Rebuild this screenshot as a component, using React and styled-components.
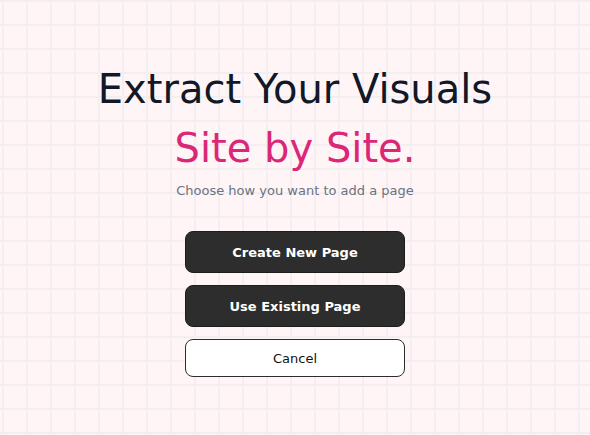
import React from 'react'
import styled, { createGlobalStyle } from 'styled-components'

const GlobalStyle = createGlobalStyle`
  html, body {
    margin: 0;
    padding: 0;
  }
  body {
    font-family: "DejaVu Sans", "Noto Sans", sans-serif;
  }
`

const Page = styled.div`
  min-height: 100vh;
  box-sizing: border-box;
  padding-top: 65px;
  display: flex;
  flex-direction: column;
  align-items: center;
  background-color: #fff5f7;
  background-image:
    linear-gradient(to right, #f3eff0 2px, transparent 2px),
    linear-gradient(to bottom, #f3eff0 2px, transparent 2px);
  background-size: 24px 24px;
  background-position: 2px 0;
`

const Title = styled.h1`
  margin: 0;
  font-size: 40px;
  font-weight: 400;
  line-height: 48px;
  text-align: center;
  color: #111827;
`

const Accent = styled.span`
  display: block;
  margin-top: 11px;
  color: #db2777;
`

const Subtitle = styled.p`
  margin: 9px 0 0;
  font-size: 13px;
  line-height: 20px;
  color: #6b7280;
`

const Actions = styled.div`
  margin-top: 30px;
  width: 220px;
  display: flex;
  flex-direction: column;
  gap: 12px;
`

const Button = styled.button`
  box-sizing: border-box;
  width: 100%;
  height: ${p => (p.$ghost ? '38px' : '42px')};
  border-radius: 8px;
  border: 1px solid ${p => (p.$ghost ? '#2d2d2d' : '#1c1c1c')};
  background: ${p => (p.$ghost ? '#ffffff' : '#2d2d2d')};
  color: ${p => (p.$ghost ? '#111111' : '#ffffff')};
  font-family: "DejaVu Sans", sans-serif;
  font-size: 13px;
  font-weight: ${p => (p.$ghost ? 400 : 700)};
  cursor: pointer;
`

const App = () => (
  <>
    <GlobalStyle />
    <Page>
      <Title>
        Extract Your Visuals
        <Accent>Site by Site.</Accent>
      </Title>
      <Subtitle>Choose how you want to add a page</Subtitle>
      <Actions>
        <Button>Create New Page</Button>
        <Button>Use Existing Page</Button>
        <Button $ghost>Cancel</Button>
      </Actions>
    </Page>
  </>
)

export default App
